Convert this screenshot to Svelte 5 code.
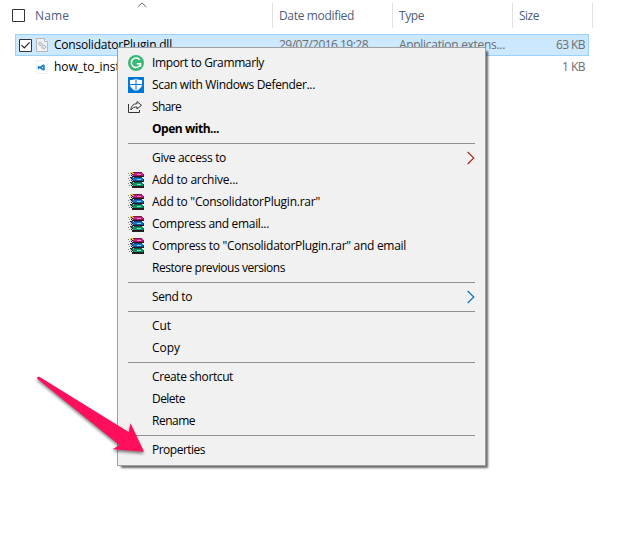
<script>
  const columns = [
    { key: 'name', label: 'Name', width: 34 },
    { key: 'date', label: 'Date modified', width: 75 },
    { key: 'type', label: 'Type', width: 25 },
    { key: 'size', label: 'Size', width: 20 }
  ];

  const groups = [
    [
      { label: 'Import to Grammarly', width: 112, icon: 'grammarly' },
      { label: 'Scan with Windows Defender...', width: 163, icon: 'defender' },
      { label: 'Share', width: 29, icon: 'share' },
      { label: 'Open with...', width: 67, bold: true }
    ],
    [
      { label: 'Give access to', width: 74, arrow: '#a5231c' },
      { label: 'Add to archive...', width: 86, icon: 'rar' },
      { label: 'Add to "ConsolidatorPlugin.rar"', width: 168, icon: 'rar' },
      { label: 'Compress and email...', width: 117, icon: 'rar' },
      { label: 'Compress to "ConsolidatorPlugin.rar" and email', width: 254, icon: 'rar' },
      { label: 'Restore previous versions', width: 133 }
    ],
    [{ label: 'Send to', width: 40, arrow: '#086cb5' }],
    [
      { label: 'Cut', width: 19 },
      { label: 'Copy', width: 28 }
    ],
    [
      { label: 'Create shortcut', width: 81 },
      { label: 'Delete', width: 33 },
      { label: 'Rename', width: 43 }
    ],
    [{ label: 'Properties', width: 53 }]
  ];

  // Tracks a label so that its text run spans the given number of pixels.
  function fit(node, width) {
    const natural = node.getBoundingClientRect().width;
    const count = node.textContent.length;
    node.style.letterSpacing = `${(width - natural) / count}px`;
  }
</script>

{#snippet book(y, dark, mid, light, shine)}
  <g transform="translate(0 {y})">
    <path d="M2 0h11l3 2v3H4L2 3z" fill="#2a1420" />
    <path d="M2 0h11l1 1H3z" fill={dark} />
    <path d="M4 1h11v1H4z" fill={mid} />
    <path d="M5 2h11v2H5z" fill={dark} />
    <path d="M5 2h10v1H5z" fill={mid} />
    <path d="M9 2h4v1H9z" fill={shine} />
    <path d="M5 3h10v1H5z" fill={light} />
    <path d="M2 1h1v1h1v1h1v1H4V3H2z" fill="#c9c9c9" />
    <path d="M0 1h1v1H0zM1 3h1v1H1z" fill="#888" />
  </g>
{/snippet}

{#snippet rar()}
  <svg class="icon" viewBox="0 0 16 16" shape-rendering="crispEdges">
    {@render book(0, '#86124f', '#c32282', '#a51463', '#f08cc8')}
    {@render book(5, '#0c3c7c', '#1c74c4', '#0a58a8', '#7cd8fa')}
    {@render book(10, '#0a5a40', '#149068', '#0a9a6a', '#72eabc')}
    <path d="M4 15h12v1H4z" fill="#222" />
    <path d="M2 0h3v1h1v1H4V1H2zM5 5h1v1H5zM5 10h1v1H5z" fill="#d9c62d" />
  </svg>
{/snippet}

{#snippet check(on)}
  <svg class="box" viewBox="0 0 13 13">
    <path d="M.5 .5h12v12H.5z" fill="#fff" stroke="#333" />
    {#if on}<path d="M2.500 6.200 5.200 9 10.600 3.400" fill="none" stroke="#222" stroke-width="1.100" />{/if}
  </svg>
{/snippet}

<main>
  <header>
    <div class="headcheck">{@render check(false)}</div>
    {#each columns as col}
      <div class="col {col.key}"><span use:fit={col.width}>{col.label}</span></div>
    {/each}
    <svg class="sort" viewBox="0 0 10 6"><path d="M.7 5 5 .9 9.300 5" fill="none" stroke="#666" /></svg>
  </header>

  <section>
    <div class="row selected">
      {@render check(true)}
      <svg class="file" viewBox="0 0 14 16">
        <path d="M1.500 1.500h8l3 3v10h-11z" fill="#f2f2f2" stroke="#b3b7ba" />
        <path d="M9.500 1.500v3h3" fill="#fff" stroke="#b3b7ba" />
        <circle cx="5.200" cy="6.800" r="1.700" fill="#dbe3e8" stroke="#929ba3" stroke-dasharray="1 .5" />
        <circle cx="8.700" cy="10" r="1.900" fill="#dbe3e8" stroke="#929ba3" stroke-dasharray="1 .5" />
      </svg>
      <span class="filename"><span use:fit={118}>ConsolidatorPlugin.dll</span></span>
      <span class="filedate"><span use:fit={89}>29/07/2016 19:28</span></span>
      <span class="filetype"><span use:fit={106}>Application extens...</span></span>
      <span class="filesize"><span use:fit={29}>63 KB</span></span>
    </div>
    <div class="row">
      <span class="box"></span>
      <svg class="file" viewBox="0 0 14 16">
        <path d="M1.500 1.500h8l3 3v10h-11z" fill="#fff" stroke="#efefef" />
        <path d="M8 5.500 4.800 7.700 3.600 6.700l-.8.500v2.600l.8.500 1.200-1L8 11.500zM8 7.600v1.900L6.500 8.500z" fill="#1479c9" fill-rule="evenodd" />
        <path d="m8 5.200 1.800.8v5L8 11.800z" fill="#2587d0" />
      </svg>
      <span class="filename"><span use:fit={96}>how_to_install.txt</span></span>
      <span class="filedate"></span>
      <span class="filetype"></span>
      <span class="filesize"><span use:fit={23}>1 KB</span></span>
    </div>
  </section>

  <nav>
    {#each groups as group}
      <ul>
        {#each group as item}
          <li class:bold={item.bold}>
            <span class="slot">
              {#if item.icon === 'grammarly'}
                <svg class="icon" viewBox="0 0 16 16">
                  <circle cx="8" cy="8" r="8" fill="#3cb878" />
                  <path d="M11.700 4.800A4.700 4.700 0 1 0 12.200 10" fill="none" stroke="#fff" stroke-width="1.500" />
                  <path d="M8.700 8.800h3.800v3" fill="none" stroke="#fff" stroke-width="1.500" />
                </svg>
              {:else if item.icon === 'defender'}
                <svg class="icon" viewBox="0 0 16 16">
                  <path d="M0 0h16v16H0z" fill="#0078d7" />
                  <path d="M8 1.500C6.500 2.700 4.500 3 2 3v4.500c0 3 3 5 6 6.800 3-1.800 6-3.800 6-6.800V3c-2.500 0-4.500-.3-6-1.500z" fill="#fff" />
                  <path d="M8 1v14M2 7.500h12" stroke="#0078d7" />
                </svg>
              {:else if item.icon === 'share'}
                <svg class="icon" viewBox="0 0 16 16" fill="none" stroke="#333">
                  <path d="M.5 5v8.500h11V11" />
                  <path d="M9 2.500 13.500 6.300 9 10V8C6.500 7.800 4.500 8.700 2.800 11 3.200 7 5.200 4.900 9 4.600z" />
                </svg>
              {:else if item.icon === 'rar'}
                {@render rar()}
              {/if}
            </span>
            <span class="label" use:fit={item.width}>{item.label}</span>
            {#if item.arrow}
              <svg class="more" viewBox="0 0 8 14"><path d="M.7 1 6.800 7 .7 13" fill="none" stroke={item.arrow} stroke-width="1.100" /></svg>
            {/if}
          </li>
        {/each}
      </ul>
    {/each}
  </nav>

  <svg class="pointer" viewBox="0 0 125 95">
    <path d="M7 8.500Q7 6.500 9.300 6.800L98.700 62 100.500 53.300 114 81.700 82.700 79.300 89.300 75Z" fill="#ff0f5b" />
  </svg>
</main>

<style>
  :global(body) { margin: 0; background: #fff; }
  main {
    position: relative;
    width: 631px;
    height: 549px;
    overflow: hidden;
    background: #fff;
    font: 12px/22px "Open Sans", "Noto Sans", sans-serif;
    color: #000;
  }
  span { white-space: nowrap; }
  svg { display: block; flex: none; }
  header {
    display: flex;
    box-sizing: border-box;
    height: 34px;
    padding-top: 3px;
    color: #4c607a;
    position: relative;
  }
  .headcheck { width: 35px; box-sizing: border-box; padding: 6px 0 0 12px; }
  .box { width: 13px; height: 13px; flex: none; }
  .col { box-sizing: border-box; height: 25px; line-height: 26px; border-right: 1px solid #e2e2e2; }
  .name { width: 238px; }
  .date, .type, .size { padding-left: 6px; }
  .date { width: 120px; }
  .type { width: 120px; }
  .size { width: 80px; }
  .sort { position: absolute; left: 137px; top: 2px; width: 10px; height: 6px; }
  .row {
    box-sizing: border-box;
    display: flex;
    align-items: center;
    width: 574px;
    height: 22px;
    margin-left: 15px;
    padding: 0 3px;
    border: 1px solid transparent;
    line-height: 20px;
  }
  .row + .row { height: 21px; }
  .selected { background: #cce8ff; border-color: #99d1ff; }
  .file { width: 14px; height: 16px; margin-left: 3px; }
  .filename { width: 225px; margin-left: 5px; }
  .filedate { width: 120px; color: #6d6d6d; }
  .filetype { width: 120px; color: #6d6d6d; }
  .filesize { margin-left: auto; color: #6d6d6d; }
  nav {
    position: absolute;
    left: 117px;
    top: 47px;
    box-sizing: border-box;
    width: 369px;
    height: 419px;
    padding: 4px 10px;
    border: 1px solid #a0a0a0;
    background: #f1f1f1;
    box-shadow: 3px 3px 2px -1px rgba(0, 0, 0, .6);
  }
  ul { list-style: none; margin: 0; padding: 0; }
  ul + ul::before { content: ""; display: block; height: 1px; margin: 3px 0; background: #919191; }
  li { display: flex; align-items: flex-start; height: 22px; }
  .slot { width: 24px; flex: none; padding-top: 3px; }
  .label { line-height: 22px; }
  .icon { width: 16px; height: 16px; }
  .bold { font-weight: 700; }
  .more { width: 8px; height: 14px; margin: 4px 0 0 auto; }
  .pointer {
    position: absolute;
    left: 30px;
    top: 370px;
    width: 125px;
    height: 95px;
    filter: drop-shadow(0 2px 1.500px rgba(0, 0, 0, .5));
  }
</style>
